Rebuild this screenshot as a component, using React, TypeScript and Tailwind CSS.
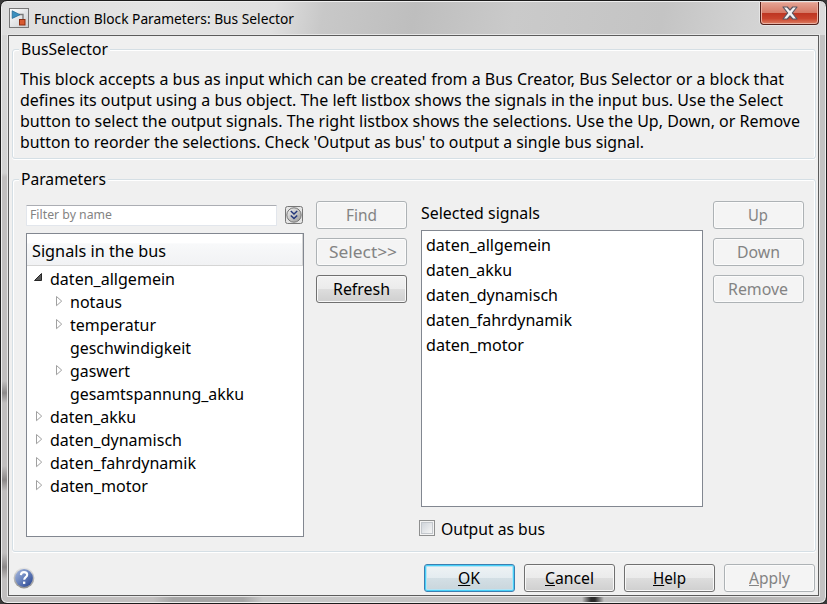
import { useLayoutEffect, useRef, type ReactNode } from "react";

const uiFont = "font-['Noto_Sans','Open_Sans',sans-serif]";

/* One line of text, scaled horizontally to an exact width. */
function Fit({ w, children, className = "" }: { w: number; children: ReactNode; className?: string }) {
  const inner = useRef<HTMLSpanElement>(null);
  useLayoutEffect(() => {
    const el = inner.current;
    if (!el) return;
    el.style.transform = "none";
    el.style.transform = `scaleX(${w / el.getBoundingClientRect().width})`;
  }, [w]);
  return (
    <span className={`block whitespace-pre ${className}`} style={{ width: w }}>
      <span ref={inner} className="inline-block origin-left align-top">
        {children}
      </span>
    </span>
  );
}

type Kind = "normal" | "disabled" | "default";

function PushButton({ w, kind = "normal", children }: { w: number; kind?: Kind; children: ReactNode }) {
  const look = {
    normal:
      "border-[#707070] text-black bg-[linear-gradient(#f2f2f2_0%,#ebebeb_49%,#dddddd_51%,#cfcfcf_100%)] shadow-[inset_0_0_0_1px_#f8f8f8]",
    disabled: "border-[#adb2b5] text-[#838383] bg-[#f4f4f4] shadow-[inset_0_0_0_1px_#fbfbfb]",
    default:
      "border-[#3c7fb1] text-black bg-[linear-gradient(#eff3f5_0%,#e4ecf0_49%,#d3dfe5_51%,#c9d5db_100%)] shadow-[inset_0_0_0_1px_#48d0f8,inset_0_0_0_2px_#b5e4f5]",
  }[kind];
  return (
    <button className={`flex h-[28px] w-[91px] shrink-0 items-center justify-center rounded-[3px] border pr-px text-[16.5px] leading-[20px] ${look}`}>
      <Fit w={w}>{children}</Fit>
    </button>
  );
}

function Group({ title, titleWidth, className, children }: { title: string; titleWidth: number; className: string; children: ReactNode }) {
  return (
    <section className={`relative ml-[3px] w-[804px] rounded-[3px] border border-[#d5dfe5] shadow-[inset_1px_1px_0_#fff,inset_-1px_0_0_#fff,0_1px_0_#fff] ${className}`}>
      <h2 className="absolute -top-[11px] left-[6px] bg-[#f0f0f0] px-[2px] text-[16.5px] leading-[20px]">
        <Fit w={titleWidth}>{title}</Fit>
      </h2>
      {children}
    </section>
  );
}

const tree = [
  { name: "daten_allgemein", w: 125, depth: 0, mark: "open" },
  { name: "notaus", w: 52, depth: 1, mark: "closed" },
  { name: "temperatur", w: 86, depth: 1, mark: "closed" },
  { name: "geschwindigkeit", w: 121, depth: 1, mark: "" },
  { name: "gaswert", w: 60, depth: 1, mark: "closed" },
  { name: "gesamtspannung_akku", w: 174, depth: 1, mark: "" },
  { name: "daten_akku", w: 86, depth: 0, mark: "closed" },
  { name: "daten_dynamisch", w: 132, depth: 0, mark: "closed" },
  { name: "daten_fahrdynamik", w: 146, depth: 0, mark: "closed" },
  { name: "daten_motor", w: 98, depth: 0, mark: "closed" },
];

const selected = [
  { name: "daten_allgemein", w: 125 },
  { name: "daten_akku", w: 86 },
  { name: "daten_dynamisch", w: 132 },
  { name: "daten_fahrdynamik", w: 146 },
  { name: "daten_motor", w: 98 },
];

const description = [
  { text: "This block accepts a bus as input which can be created from a Bus Creator, Bus Selector or a block that", w: 764 },
  { text: "defines its output using a bus object. The left listbox shows the signals in the input bus. Use the Select", w: 763 },
  { text: "button to select the output signals. The right listbox shows the selections. Use the Up, Down, or Remove", w: 780 },
  { text: "button to reorder the selections. Check 'Output as bus' to output a single bus signal.", w: 624 },
];

function TreeMark({ mark }: { mark: string }) {
  return (
    <svg width="16" height="23" viewBox="0 0 16 23" className="shrink-0">
      {mark === "open" && <path d="M7.5 6.5v7h-7z" fill="#595959" stroke="#262626" />}
      {mark === "closed" && <path d="M2.500 6.500v9.200L7.700 11.100z" fill="#fff" stroke="#a0a0a0" />}
    </svg>
  );
}

function BlockIcon() {
  return (
    <svg width="20" height="20" viewBox="0 0 20 20" className="shrink-0">
      <defs>
        <linearGradient id="tile" x2="1" y2="1">
          <stop stopColor="#fff" />
          <stop offset="1" stopColor="#c9cccf" />
        </linearGradient>
      </defs>
      <rect x=".5" y=".5" width="19" height="19" fill="url(#tile)" stroke="#777" />
      <path d="M10 6.500h4v5" fill="none" stroke="#777" strokeWidth="1.300" />
      <path d="M3.200 2.800v7.600L11 6.700z" fill="#3b8fbe" stroke="#246c97" strokeWidth=".8" />
      <rect x="10.500" y="11.500" width="5.500" height="5.500" fill="#d85a30" stroke="#8c2e13" />
    </svg>
  );
}

function HelpIcon() {
  return (
    <svg width="22" height="22" viewBox="0 0 22 22" className="shrink-0">
      <defs>
        <linearGradient id="ball" x1="0" y1="0" x2="1" y2="1">
          <stop stopColor="#a9b9dd" />
          <stop offset=".45" stopColor="#6d87c0" />
          <stop offset="1" stopColor="#233e8c" />
        </linearGradient>
        <linearGradient id="ring" x2="0" y2="1">
          <stop stopColor="#e6e6e6" />
          <stop offset="1" stopColor="#8e8e8e" />
        </linearGradient>
      </defs>
      <circle cx="11" cy="11" r="10.400" fill="url(#ring)" />
      <circle cx="11" cy="11" r="8.900" fill="url(#ball)" />
      <path d="M7.900 8.100C8 5.900 9.300 5.100 11 5.100c1.900 0 3.200 1 3.200 2.600 0 2.400-3 2.400-3 5" fill="none" stroke="#fff" strokeWidth="2.100" />
      <rect x="10" y="14.600" width="2.300" height="2.300" fill="#fff" />
    </svg>
  );
}

function ExpandIcon() {
  return (
    <svg width="19" height="19" viewBox="0 0 19 19" className="mt-px shrink-0">
      <defs>
        <linearGradient id="knob" x2="1" y2="1">
          <stop stopColor="#f4f4f4" />
          <stop offset="1" stopColor="#999" />
        </linearGradient>
      </defs>
      <rect x=".5" y=".5" width="17" height="17" rx="2" fill="#e4e4e4" stroke="#777" />
      <circle cx="9" cy="9" r="7.200" fill="url(#knob)" stroke="#777" />
      <path d="M5.800 5l3.200 3 3.200-3M5.800 9.500l3.200 3 3.200-3" fill="none" stroke="#25387c" strokeWidth="1.500" />
    </svg>
  );
}

function CloseButton() {
  return (
    <button className="flex h-[23px] w-[59px] items-center justify-center rounded-b-[4px] border border-t-0 border-[#53201b] bg-[linear-gradient(#e5a596_0%,#d67a66_48%,#bd3521_50%,#c9432c_75%,#dd8065_100%)] shadow-[inset_0_0_0_1px_#eab0a2,0_0_0_1px_#e5e5e5]">
      <svg width="16" height="14" viewBox="0 0 16 14">
        <path d="M1 1h4.300L8 4.200 10.700 1H15l-4.700 6 4.700 6h-4.300L8 9.800 5.300 13H1l4.700-6z" fill="#f2f2f2" stroke="#5a5662" strokeWidth="1.200" strokeLinejoin="round" />
      </svg>
    </button>
  );
}

export default function App() {
  return (
    <div className="h-[604px] w-[827px] overflow-hidden bg-[#3a3a3a]">
      <div className={`flex h-[604px] w-[827px] flex-col rounded-[7px] border border-[#1c1c1c] bg-[linear-gradient(90deg,transparent_0px,transparent_400px,#c3c2c2_401px),linear-gradient(#d8d8d8_0px,#d2d2d2_172px,#c1bfbf_176px,#c1bfbf_380px,#8c8989_392px,#c1bfbf_402px,#c1bfbf_465px,#8c8989_479px,#c1bfbf_490px,#c1bfbf_552px,#8c8989_566px,#c1bfbf_578px)] text-black shadow-[inset_0_0_0_1px_#eeeeee] ${uiFont}`}>
        <header className="mx-px mt-px flex h-[33px] shrink-0 justify-between rounded-t-[6px] bg-[linear-gradient(100deg,#dedede_0%,#e4e4e4_20%,#dfdfdf_33%,#c8c8c8_39%,#bebebe_50%,#cacaca_62%,#c4c4c4_80%,#d2d2d2_90%,#dcdcdc_100%)] pr-[6px] pl-[7px]">
          <div className="flex pt-[6px]">
            <BlockIcon />
            <h1 className="pl-[5px] text-[15px] leading-[20px]">
              <Fit w={260}>Function Block Parameters: Bus Selector</Fit>
            </h1>
          </div>
          <CloseButton />
        </header>

        <main className="ml-[7px] flex h-[561px] w-[811px] shrink-0 flex-col border border-[#5c5c5c] bg-[#f0f0f0] shadow-[0_0_0_1px_#e7e7e7]">
          <Group title="BusSelector" titleWidth={87} className="mt-[13px] h-[110px] shrink-0 pt-[18px] pl-[7px]">
            <p className="text-[16.5px] leading-[21px]">
              {description.map((line) => (
                <Fit key={line.text} w={line.w}>{line.text}</Fit>
              ))}
            </p>
          </Group>

          <Group title="Parameters" titleWidth={85} className="mt-[20px] flex h-[373px] shrink-0 pl-[13px]">
            <div className="w-[278px] shrink-0 pt-[25px]">
              <div className="flex justify-between">
                <div className="flex h-[21px] w-[251px] items-center rounded-[1px] border border-[#e2e6ec] border-t-[#abadb3] bg-white pb-[2px] pl-[3px] text-[13px] leading-[17px] text-[#838383]">
                  <Fit w={82}>Filter by name</Fit>
                </div>
                <ExpandIcon />
              </div>
              <div className="mt-[7px] h-[304px] border border-[#828790] bg-white text-[16.5px]">
                <div className="mb-px flex h-[32px] items-center border-r border-b border-[#d5d5d5] bg-[linear-gradient(#fff_0%,#fff_28%,#f8f9fa_32%,#f1f2f4_100%)] pt-px pl-[5px] leading-[23px]">
                  <Fit w={134}>Signals in the bus</Fit>
                </div>
                {tree.map((row) => (
                  <div key={row.name} className={`flex h-[23px] leading-[23px] ${row.depth ? "pl-[27px]" : "pl-[7px]"}`}>
                    <TreeMark mark={row.mark} />
                    <Fit w={row.w}>{row.name}</Fit>
                  </div>
                ))}
              </div>
            </div>

            <div className="ml-[12px] flex flex-col gap-[9px] pt-[21px]">
              <PushButton w={31} kind="disabled">Find</PushButton>
              <PushButton w={68} kind="disabled">Select&gt;&gt;</PushButton>
              <PushButton w={57}>Refresh</PushButton>
            </div>

            <div className="ml-[14px] w-[282px] shrink-0 pt-[23px]">
              <div className="h-[27px] text-[16.5px] leading-[20px]">
                <Fit w={119}>Selected signals</Fit>
              </div>
              <div className="h-[277px] border border-[#828790] bg-white pt-px pl-[4px] text-[16.5px]">
                {selected.map((row) => (
                  <div key={row.name} className="h-[25px] leading-[25px]">
                    <Fit w={row.w}>{row.name}</Fit>
                  </div>
                ))}
              </div>
              <label className="mt-[12px] -ml-[2px] flex items-center gap-[6px] text-[16.5px] leading-[20px]">
                <span className="mb-[2px] flex h-[16px] w-[16px] items-center justify-center border border-[#8e8f8f] bg-[#f4f4f4]">
                  <span className="h-[12px] w-[12px] border border-[#c3c7cc] bg-[linear-gradient(135deg,#d0d5db,#f6f6f6)]" />
                </span>
                <Fit w={104}>Output as bus</Fit>
              </label>
            </div>

            <div className="ml-[10px] flex flex-col gap-[9px] pt-[21px]">
              <PushButton w={20} kind="disabled">Up</PushButton>
              <PushButton w={43} kind="disabled">Down</PushButton>
              <PushButton w={60} kind="disabled">Remove</PushButton>
            </div>
          </Group>

          <footer className="mt-[12px] flex items-center justify-between pr-[3px] pl-[4px]">
            <HelpIcon />
            <div className="flex gap-[9px]">
              <PushButton w={22} kind="default"><u>O</u>K</PushButton>
              <PushButton w={49}><u>C</u>ancel</PushButton>
              <PushButton w={33}><u>H</u>elp</PushButton>
              <PushButton w={41} kind="disabled"><u>A</u>pply</PushButton>
            </div>
          </footer>
        </main>
        <div className="mx-[7px] mt-px h-[5px] bg-[linear-gradient(90deg,#c1bfbf_0px,#c1bfbf_145px,#a5a5a5_165px,#a5a5a5_235px,#c8c8c8_255px,#c1c1c1_574px,#2b2b2b_583px,#2b2b2b_587px,#c1c1c1_596px,#b0b0b0_700px,#c1bfbf_811px)]" />
      </div>
    </div>
  );
}
